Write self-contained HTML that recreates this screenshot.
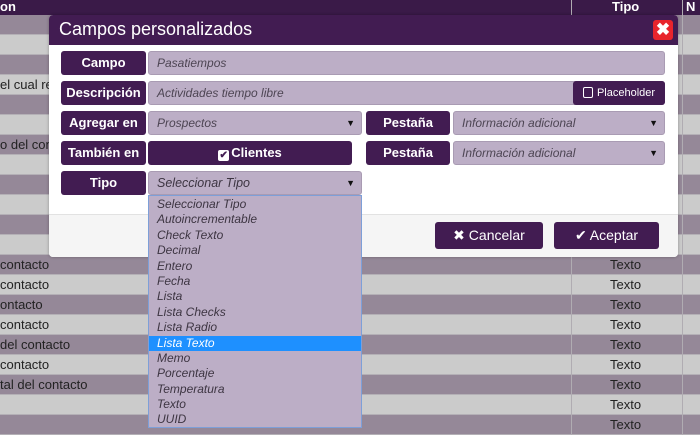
<!DOCTYPE html>
<html><head><meta charset="utf-8"><style>
*{box-sizing:border-box;margin:0;padding:0}
body{width:700px;height:435px;overflow:hidden;position:relative;font-family:"Liberation Sans",Arial,sans-serif;background:#cbcbcb}
.row{position:absolute;left:0;width:700px;height:20px;border-bottom:1px solid #b4b0b6;font-size:13px;color:#222;line-height:19px}
.d{background:#958898}.l{background:#cbcbcb}
.vl{position:absolute;top:0;width:1px;height:435px;background:#b0acb2}
.abs{position:absolute}
.lbl{position:absolute;left:61px;width:85px;height:24px;background:#421c52;color:#fff;font-weight:bold;font-size:13px;text-align:center;line-height:23px;border-radius:3px}
.inp{position:absolute;height:24px;background:#bcaec6;border:1px solid #a99bb3;border-radius:3px;color:#4d4553;font-style:italic;font-size:12px;line-height:22px;padding-left:8px}
.arr{position:absolute;right:6px;top:0;font-style:normal;font-size:9px;color:#111}
.btn{position:absolute;background:#421c52;color:#fff;border-radius:3px;text-align:center}
.opt{height:15.4px;line-height:15px;padding-left:8px;font-size:12px;font-style:italic;color:#3d3542}
</style></head><body>
<div class="row" style="top:0;height:15px;background:#3a1a48;color:#fff;border:none;line-height:13px;font-weight:bold">on<span class="abs" style="left:612px;top:0">Tipo</span><span class="abs" style="left:686px;top:0">N</span></div>
<div id="rows"></div>
<script>
var t=["","","","el cual re","","","o del cont","","","","","","contacto"," contacto","ontacto"," contacto","del contacto","contacto","tal del contacto","",""];
var h="";for(var i=0;i<21;i++){var y=15+i*20;h+='<div class="row '+(i%2?'l':'d')+'" style="top:'+y+'px">'+t[i]+(i>=12?'<span class="abs" style="left:610px;top:0">Texto</span>':'')+'</div>';}
document.getElementById('rows').innerHTML=h;
</script>
<div class="vl" style="left:571px"></div><div class="vl" style="left:682px"></div>
<div class="abs" style="left:49px;top:15px;width:629px;height:242px;background:#fff;border-radius:4px;box-shadow:0 0 3px rgba(0,0,0,.3);overflow:hidden">
 <div style="height:30px;background:#421c52;color:#fff;font-size:18px;line-height:28px;padding-left:10px">Campos personalizados</div>
 <div class="abs" style="left:604px;top:5px;width:20px;height:20px;background:#e8242c;border-radius:3px;color:#fff;font-weight:bold;font-size:17px;line-height:20px;text-align:center">✖</div>
 <div class="abs" style="left:0;top:199px;width:629px;height:43px;background:#f5f5f5;border-top:1px solid #e2e2e2"></div>
</div>
<div class="lbl" style="top:51px">Campo</div>
<div class="lbl" style="top:81px">Descripción</div>
<div class="lbl" style="top:111px">Agregar en</div>
<div class="lbl" style="top:141px">También en</div>
<div class="lbl" style="top:171px">Tipo</div>
<div class="inp" style="left:148px;top:51px;width:517px">Pasatiempos</div>
<div class="inp" style="left:148px;top:81px;width:517px">Actividades tiempo libre</div>
<div class="btn" style="left:573px;top:81px;width:92px;height:24px;font-size:11px;line-height:24px"><span style="display:inline-block;width:10px;height:11px;border:1.5px solid #fff;border-radius:2px;vertical-align:-2px;margin-right:4px"></span>Placeholder</div>
<div class="inp" style="left:148px;top:111px;width:214px">Prospectos<span class="arr">▼</span></div>
<div class="btn" style="left:148px;top:141px;width:204px;height:24px;font-weight:bold;font-size:13px;line-height:23px"><span style="display:inline-block;width:11px;height:11px;background:#fff;border-radius:2px;color:#421c52;font-size:10px;line-height:11px;vertical-align:-1px;margin-right:2px">✔</span>Clientes</div>
<div class="lbl" style="left:366px;top:111px;width:84px">Pestaña</div>
<div class="lbl" style="left:366px;top:141px;width:84px">Pestaña</div>
<div class="inp" style="left:453px;top:111px;width:212px">Información adicional<span class="arr">▼</span></div>
<div class="inp" style="left:453px;top:141px;width:212px">Información adicional<span class="arr">▼</span></div>
<div class="inp" style="left:148px;top:171px;width:214px;color:#3d3542;font-size:12.5px">Seleccionar Tipo<span class="arr">▼</span></div>
<div class="abs" style="left:148px;top:195px;width:214px;height:233px;background:#bcaec6;border:1px solid #7d9fd8;padding-top:1px">
<div class="opt">Seleccionar Tipo</div><div class="opt">Autoincrementable</div><div class="opt">Check Texto</div><div class="opt">Decimal</div><div class="opt">Entero</div><div class="opt">Fecha</div><div class="opt">Lista</div><div class="opt">Lista Checks</div><div class="opt">Lista Radio</div><div class="opt" style="background:#1e90ff;color:#fff">Lista Texto</div><div class="opt">Memo</div><div class="opt">Porcentaje</div><div class="opt">Temperatura</div><div class="opt">Texto</div><div class="opt">UUID</div>
</div>
<div class="btn" style="left:435px;top:222px;width:108px;height:27px;font-size:14px;line-height:27px">✖ Cancelar</div>
<div class="btn" style="left:554px;top:222px;width:105px;height:27px;font-size:14px;line-height:27px">✔ Aceptar</div>
</body></html>
